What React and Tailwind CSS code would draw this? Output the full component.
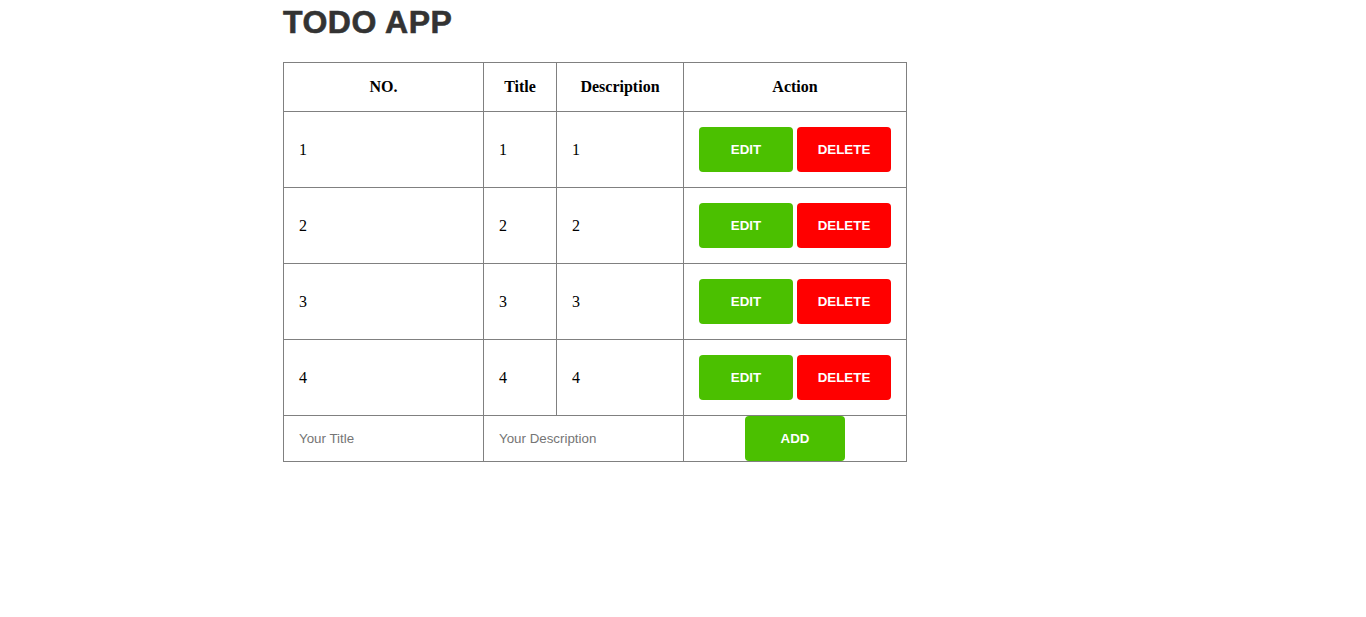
const todos = [
  { id: 1, title: '1', description: '1' },
  { id: 2, title: '2', description: '2' },
  { id: 3, title: '3', description: '3' },
  { id: 4, title: '4', description: '4' },
];

function App() {
  return (
    <div className="w-[800px] mx-auto bg-white">
      <h1 className="font-['Liberation_Sans',Arial,sans-serif] font-bold text-[32px] leading-[37px] tracking-[0.5px] text-[#333333] [-webkit-text-stroke:0.6px_#333333] pt-[4px] mb-[21px]">
        TODO APP
      </h1>
      <table className="border-collapse table-fixed w-[623px] font-['Liberation_Serif','Times_New_Roman',serif] text-[16px] text-black">
        <colgroup>
          <col className="w-[200px]" />
          <col className="w-[73px]" />
          <col className="w-[127px]" />
          <col className="w-[223px]" />
        </colgroup>
        <thead>
          <tr className="h-[49px]">
            <th className="border border-[#808080] font-bold text-center">NO.</th>
            <th className="border border-[#808080] font-bold text-center">Title</th>
            <th className="border border-[#808080] font-bold text-center">Description</th>
            <th className="border border-[#808080] font-bold text-center">Action</th>
          </tr>
        </thead>
        <tbody>
          {todos.map((todo) => (
            <tr key={todo.id} className="h-[76px]">
              <td className="border border-[#808080] px-[15px]">{todo.id}</td>
              <td className="border border-[#808080] px-[15px]">{todo.title}</td>
              <td className="border border-[#808080] px-[15px]">{todo.description}</td>
              <td className="border border-[#808080] px-[15px] py-[15px]">
                <div className="flex gap-[4px] font-['Liberation_Sans',Arial,sans-serif] text-[13.33px] font-bold text-white">
                  <button className="w-[94px] h-[45px] rounded-[4px] bg-[#4bc000]">EDIT</button>
                  <button className="w-[94px] h-[45px] rounded-[4px] bg-[#ff0000]">DELETE</button>
                </div>
              </td>
            </tr>
          ))}
          <tr className="h-[46px]">
            <td className="border border-[#808080] p-0">
              <input
                className="w-full h-[45px] px-[15px] outline-none font-['Liberation_Sans',Arial,sans-serif] text-[13.33px] placeholder:text-[#757575]"
                placeholder="Your Title"
              />
            </td>
            <td colSpan={2} className="border border-[#808080] p-0">
              <input
                className="w-full h-[45px] px-[15px] outline-none font-['Liberation_Sans',Arial,sans-serif] text-[13.33px] placeholder:text-[#757575]"
                placeholder="Your Description"
              />
            </td>
            <td className="border border-[#808080] p-0 text-center align-bottom">
              <button className="w-[100px] h-[45px] rounded-[4px] bg-[#4bc000] text-white font-bold font-['Liberation_Sans',Arial,sans-serif] text-[13.33px] align-bottom">
                ADD
              </button>
            </td>
          </tr>
        </tbody>
      </table>
    </div>
  );
}

export default App;
